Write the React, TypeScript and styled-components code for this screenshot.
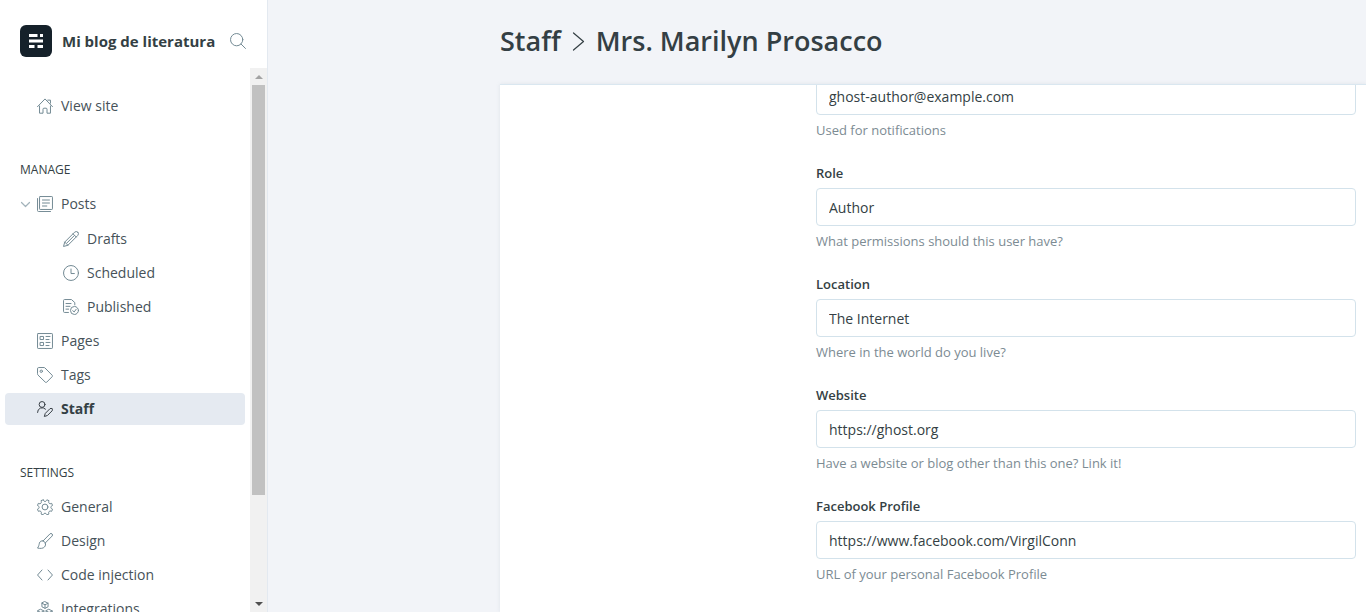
import React from "react";
import styled, { createGlobalStyle, css } from "styled-components";

const GlobalStyle = createGlobalStyle`
  *, *::before, *::after { box-sizing: border-box; }
  body {
    margin: 0;
    background: #f2f4f8;
    color: #343f44;
    font-family: "Segoe UI", "Open Sans", "Noto Sans", sans-serif;
    font-size: 14px;
  }
`;

const Shell = styled.div`
  display: flex;
  height: 100vh;
  overflow: hidden;
`;

const Sidebar = styled.aside`
  display: flex;
  flex-direction: column;
  flex: 0 0 268px;
  background: #fff;
  border-right: 1px solid #e3e9f0;
`;

const SiteHeader = styled.header`
  display: flex;
  align-items: center;
  flex: 0 0 68px;
  padding: 14px 21px 0 20px;
`;

const SiteName = styled.span`
  flex: 1;
  margin-left: 10px;
  font-size: 15px;
  font-weight: 700;
  line-height: 20px;
  white-space: nowrap;
`;

const SearchButton = styled.button`
  display: flex;
  padding: 0;
  border: 0;
  background: none;
  color: #738a94;
  cursor: pointer;
`;

const SidebarBody = styled.div`
  display: flex;
  flex: 1;
  min-height: 0;
`;

const Nav = styled.nav`
  flex: 1;
  min-width: 0;
  padding: 22px 5px 0;
  overflow: hidden;
`;

const NavHeading = styled.h3`
  margin: 38px 0 8px;
  padding-left: 15px;
  font-size: 12px;
  font-weight: 400;
  line-height: 20px;
  text-transform: uppercase;
`;

const NavList = styled.ul<{ $nested?: boolean }>`
  display: flex;
  flex-direction: column;
  gap: 2px;
  margin: 0;
  padding: ${(p) => (p.$nested ? "3px 0 0" : "0")};
  list-style: none;
`;

const NavItem = styled.li`
  position: relative;
`;

const NavLink = styled.a<{ $active?: boolean; $nested?: boolean }>`
  display: flex;
  align-items: center;
  gap: 8px;
  height: 32px;
  padding-left: ${(p) => (p.$nested ? 58 : 32)}px;
  border-radius: 4px;
  background: ${(p) => (p.$active ? "#e5eaf1" : "transparent")};
  color: ${(p) => (p.$active ? "#343f44" : "#465259")};
  font-weight: ${(p) => (p.$active ? 700 : 400)};
  line-height: 20px;
  text-decoration: none;

  svg {
    color: ${(p) => (p.$active ? "#394047" : "#738a94")};
  }
`;

const ExpandButton = styled.button`
  position: absolute;
  top: 11px;
  left: 15px;
  display: flex;
  padding: 0;
  border: 0;
  background: none;
  color: #a3b3bb;
  cursor: pointer;
`;

const ScrollTrack = styled.div`
  display: flex;
  flex-direction: column;
  flex: 0 0 17px;
  padding: 0 2px;
  background: #f1f1f1;
`;

const ScrollArrow = styled.span`
  display: flex;
  align-items: center;
  justify-content: center;
  flex: 0 0 17px;
`;

const ScrollRail = styled.div`
  display: grid;
  grid-template-rows: 41fr 10fr;
  flex: 1;
`;

const ScrollThumb = styled.div`
  background: #c1c1c1;
`;

const Main = styled.main`
  display: flex;
  flex-direction: column;
  flex: 1;
  min-width: 0;
  padding-left: 232px;
`;

const TitleBar = styled.h2`
  display: flex;
  align-items: center;
  gap: 11px;
  flex: 0 0 84px;
  margin: 0;
  padding-bottom: 2px;
  font-size: 27px;
  font-weight: 600;
  line-height: 36px;
  white-space: nowrap;

  a {
    color: inherit;
    text-decoration: none;
  }
`;

const Panel = styled.section`
  flex: 1;
  min-height: 0;
  border-top: 1px solid #dae7f0;
  background: #fff;
  box-shadow: 0 0 4px rgba(120, 140, 160, 0.15);
  overflow: hidden;
`;

/* The form is scrolled down to the e-mail field. */
const Form = styled.form`
  display: flex;
  flex-direction: column;
  gap: 28px;
  margin-top: -8px;
  padding: 0 10px 0 316px;
`;

const Field = styled.div`
  display: flex;
  flex-direction: column;
`;

const Label = styled.label`
  margin-bottom: 7px;
  font-size: 13px;
  font-weight: 600;
  line-height: 15px;
`;

const control = css`
  width: 100%;
  height: 38px;
  margin: 0;
  padding: 0 12px;
  border: 1px solid #d3e2eb;
  border-radius: 4px;
  outline: 0;
  background: #fff;
  color: #343f44;
  font-family: inherit;
  font-size: 14px;
  font-weight: 400;
`;

const Input = styled.input`
  ${control}
`;

const Select = styled.select`
  ${control}
  appearance: none;
`;

const Hint = styled.p`
  margin: 7px 0 0;
  color: #7c8b93;
  font-size: 13px;
  line-height: 16px;
`;

const Svg = styled.svg<{ $thin?: boolean }>`
  display: block;
  flex: none;
  fill: none;
  stroke: currentColor;
  stroke-width: ${(p) => (p.$thin ? 1.2 : 1.5)};
  stroke-linecap: round;
  stroke-linejoin: round;
`;

const Icon = ({ children }: { children: React.ReactNode }) => (
  <Svg width="16" height="16" viewBox="0 0 24 24" aria-hidden="true">
    {children}
  </Svg>
);

const icons = {
  search: (
    <Icon>
      <circle cx="10" cy="10" r="9.2" />
      <path d="M16.6 16.6l6.6 6.6" />
    </Icon>
  ),
  house: (
    <Icon>
      <path d="M.8 13L12 1.4 23.2 13" />
      <path d="M3.8 12v10.8H9v-6a1.5 1.5 0 0 1 1.5-1.5h3a1.5 1.5 0 0 1 1.5 1.5v6h5.2V12" />
      <path d="M16.2 3.2h4v4.6" />
    </Icon>
  ),
  posts: (
    <Icon>
      <rect x="3.8" y=".8" width="19.4" height="19.4" rx="1" />
      <path d="M.8 3.8v18a1.5 1.5 0 0 0 1.5 1.5h18" />
      <path d="M8.2 6h10.5M8.2 10.5h10.5M8.2 15h6.5" />
    </Icon>
  ),
  pencil: (
    <Icon>
      <path d="M22.2 1.8a3.4 3.4 0 0 0-4.8 0L2.6 16.6.8 23.2l6.6-1.8L22.2 6.6a3.4 3.4 0 0 0 0-4.8z" />
      <path d="M15 4.2l4.8 4.8M2.6 16.6l4.8 4.8M6 17.8L17 6.8" />
    </Icon>
  ),
  clock: (
    <Icon>
      <circle cx="12" cy="12" r="11.2" />
      <path d="M12 6v6.8h5" />
    </Icon>
  ),
  published: (
    <Icon>
      <path d="M8.2 20.2H2.3A1.5 1.5 0 0 1 .8 18.7V2.3A1.5 1.5 0 0 1 2.3.8h10.4l5 4.6v3.4" />
      <path d="M4.5 6.8h7.5M4.5 11h6M4.5 15.2h4" />
      <circle cx="17.2" cy="17.2" r="6" />
      <path d="M19.8 15.4l-3 4-2.2-1.8" />
    </Icon>
  ),
  pages: (
    <Icon>
      <rect x=".8" y=".8" width="22.4" height="22.4" rx="1" />
      <rect x="5.2" y="5.2" width="4.6" height="4.6" />
      <rect x="5.2" y="14.2" width="4.6" height="4.6" />
      <path d="M13.5 5.2h6M13.5 9.8h4.5M13.5 14.2h6M13.5 18.8h4.5" />
    </Icon>
  ),
  tag: (
    <Icon>
      <path d="M.8 2.3A1.5 1.5 0 0 1 2.3.8h8.2a2 2 0 0 1 1.4.6l10.9 11a1.5 1.5 0 0 1 0 2.1l-8.2 8.3a1.5 1.5 0 0 1-2.1 0L1.4 12a2 2 0 0 1-.6-1.4z" />
      <circle cx="6.4" cy="6.4" r="1.8" />
    </Icon>
  ),
  staff: (
    <Icon>
      <circle cx="7.6" cy="5.2" r="4.4" />
      <path d="M.8 17.2a7 7 0 0 1 12-5" />
      <path d="M22.6 11.6a2.3 2.3 0 0 0-3.2 0l-7 7-1.4 4.6 4.6-1.4 7-7a2.3 2.3 0 0 0 0-3.2z" />
    </Icon>
  ),
  gear: (
    <Icon>
      <circle cx="12" cy="12" r="4.4" />
      <path d="M9.7 2.3a2.6 2.6 0 0 0 4.6 0l.5-1.1 3.2 1.3-.4 1.2a2.6 2.6 0 0 0 3.3 3.3l1.1-.5 1.3 3.2-1.1.5a2.6 2.6 0 0 0 0 4.6l1.1.5-1.3 3.2-1.1-.4a2.6 2.6 0 0 0-3.3 3.3l.4 1.1-3.2 1.3-.5-1.1a2.6 2.6 0 0 0-4.6 0l-.5 1.1L6 22.5l.4-1.1a2.6 2.6 0 0 0-3.3-3.3l-1.1.4L.7 15.3l1.1-.5a2.6 2.6 0 0 0 0-4.6l-1.1-.5L2 6.5l1.1.5a2.6 2.6 0 0 0 3.3-3.3L6 2.5l3.2-1.3z" />
    </Icon>
  ),
  brush: (
    <Icon>
      <path d="M9.2 11.8L19.4 1.4a2.2 2.2 0 0 1 3.2 3.2L12.4 15" />
      <path d="M9.2 11.8c-2.8-.4-5 .8-5.6 3.4-.6 2.8-1 5-2.8 7.4 4.4 1 8.4.6 10.4-1.6 1.6-1.8 2-4 1.2-6-.6-1.6-1.8-2.8-3.2-3.2z" />
    </Icon>
  ),
  code: (
    <Icon>
      <path d="M7.5 4.5L.8 12l6.7 7.5M16.5 4.5L23.2 12l-6.7 7.5" />
    </Icon>
  ),
  modules: (
    <Icon>
      <path d="M12 1l4.6 2.3v5.4L12 11 7.4 8.7V3.3zM7.4 3.3L12 5.7l4.6-2.4M12 5.7V11" />
      <path d="M5.8 12.6l4.6 2.3v5.4l-4.6 2.3-4.6-2.3v-5.4zM1.2 14.9l4.6 2.4 4.6-2.4M5.8 17.3v5.3" />
      <path d="M18.2 12.6l4.6 2.3v5.4l-4.6 2.3-4.6-2.3v-5.4zM13.6 14.9l4.6 2.4 4.6-2.4M18.2 17.3v5.3" />
    </Icon>
  ),
};

const Logo = () => (
  <svg width="32" height="32" viewBox="0 0 32 32" role="img" aria-label="Ghost">
    <rect width="32" height="32" rx="6" fill="#15212a" />
    <path
      fill="#fff"
      d="M9 9h8.500v3H9zM20 9h3v3h-3zM9 14.500h14v3H9zM9 20h5.500v3H9zM17.500 20H23v3h-5.500z"
    />
  </svg>
);

type Item = { label: string; icon: React.ReactNode; active?: boolean; children?: Item[] };

const manageItems: Item[] = [
  {
    label: "Posts",
    icon: icons.posts,
    children: [
      { label: "Drafts", icon: icons.pencil },
      { label: "Scheduled", icon: icons.clock },
      { label: "Published", icon: icons.published },
    ],
  },
  { label: "Pages", icon: icons.pages },
  { label: "Tags", icon: icons.tag },
  { label: "Staff", icon: icons.staff, active: true },
];

const settingsItems: Item[] = [
  { label: "General", icon: icons.gear },
  { label: "Design", icon: icons.brush },
  { label: "Code injection", icon: icons.code },
  { label: "Integrations", icon: icons.modules },
];

const Menu = ({ items, nested }: { items: Item[]; nested?: boolean }) => (
  <NavList $nested={nested}>
    {items.map((item) => (
      <NavItem key={item.label}>
        <NavLink
          href="#"
          $active={item.active}
          $nested={nested}
          aria-current={item.active ? "page" : undefined}
        >
          {item.icon}
          {item.label}
        </NavLink>
        {item.children && (
          <>
            <ExpandButton type="button" aria-label="Collapse posts">
              <Svg $thin width="11" height="11" viewBox="0 0 11 11" aria-hidden="true">
                <path d="M1.5 3.5l4 4 4-4" />
              </Svg>
            </ExpandButton>
            <Menu items={item.children} nested />
          </>
        )}
      </NavItem>
    ))}
  </NavList>
);

const fields = [
  { id: "role", label: "Role", value: "Author", hint: "What permissions should this user have?", select: true },
  { id: "location", label: "Location", value: "The Internet", hint: "Where in the world do you live?" },
  { id: "website", label: "Website", value: "https://ghost.org", hint: "Have a website or blog other than this one? Link it!" },
  { id: "facebook", label: "Facebook Profile", value: "https://www.facebook.com/VirgilConn", hint: "URL of your personal Facebook Profile" },
];

export default function App() {
  return (
    <>
      <GlobalStyle />
      <Shell>
        <Sidebar>
          <SiteHeader>
            <Logo />
            <SiteName>Mi blog de literatura</SiteName>
            <SearchButton type="button" aria-label="Search">
              {icons.search}
            </SearchButton>
          </SiteHeader>
          <SidebarBody>
            <Nav>
              <Menu items={[{ label: "View site", icon: icons.house }]} />
              <NavHeading>Manage</NavHeading>
              <Menu items={manageItems} />
              <NavHeading>Settings</NavHeading>
              <Menu items={settingsItems} />
            </Nav>
            <ScrollTrack aria-hidden="true">
              <ScrollArrow>
                <svg width="8" height="4" viewBox="0 0 8 4">
                  <path d="M0 4l4-4 4 4z" fill="#a3a3a3" />
                </svg>
              </ScrollArrow>
              <ScrollRail>
                <ScrollThumb />
              </ScrollRail>
              <ScrollArrow>
                <svg width="8" height="4" viewBox="0 0 8 4">
                  <path d="M0 0l4 4 4-4z" fill="#505050" />
                </svg>
              </ScrollArrow>
            </ScrollTrack>
          </SidebarBody>
        </Sidebar>
        <Main>
          <TitleBar>
            <a href="#">Staff</a>
            <Svg $thin width="13" height="20" viewBox="0 0 13 20" aria-hidden="true">
              <path d="M1.5 2l10 8.5-10 8.5" />
            </Svg>
            <span>Mrs. Marilyn Prosacco</span>
          </TitleBar>
          <Panel>
            <Form>
              <Field>
                <Input
                  type="email"
                  aria-label="Email"
                  aria-describedby="email-hint"
                  defaultValue="ghost-author@example.com"
                />
                <Hint id="email-hint">Used for notifications</Hint>
              </Field>
              {fields.map((f) => (
                <Field key={f.id}>
                  <Label htmlFor={f.id}>{f.label}</Label>
                  {f.select ? (
                    <Select id={f.id} defaultValue={f.value}>
                      <option>{f.value}</option>
                    </Select>
                  ) : (
                    <Input id={f.id} type="text" defaultValue={f.value} />
                  )}
                  <Hint>{f.hint}</Hint>
                </Field>
              ))}
            </Form>
          </Panel>
        </Main>
      </Shell>
    </>
  );
}
